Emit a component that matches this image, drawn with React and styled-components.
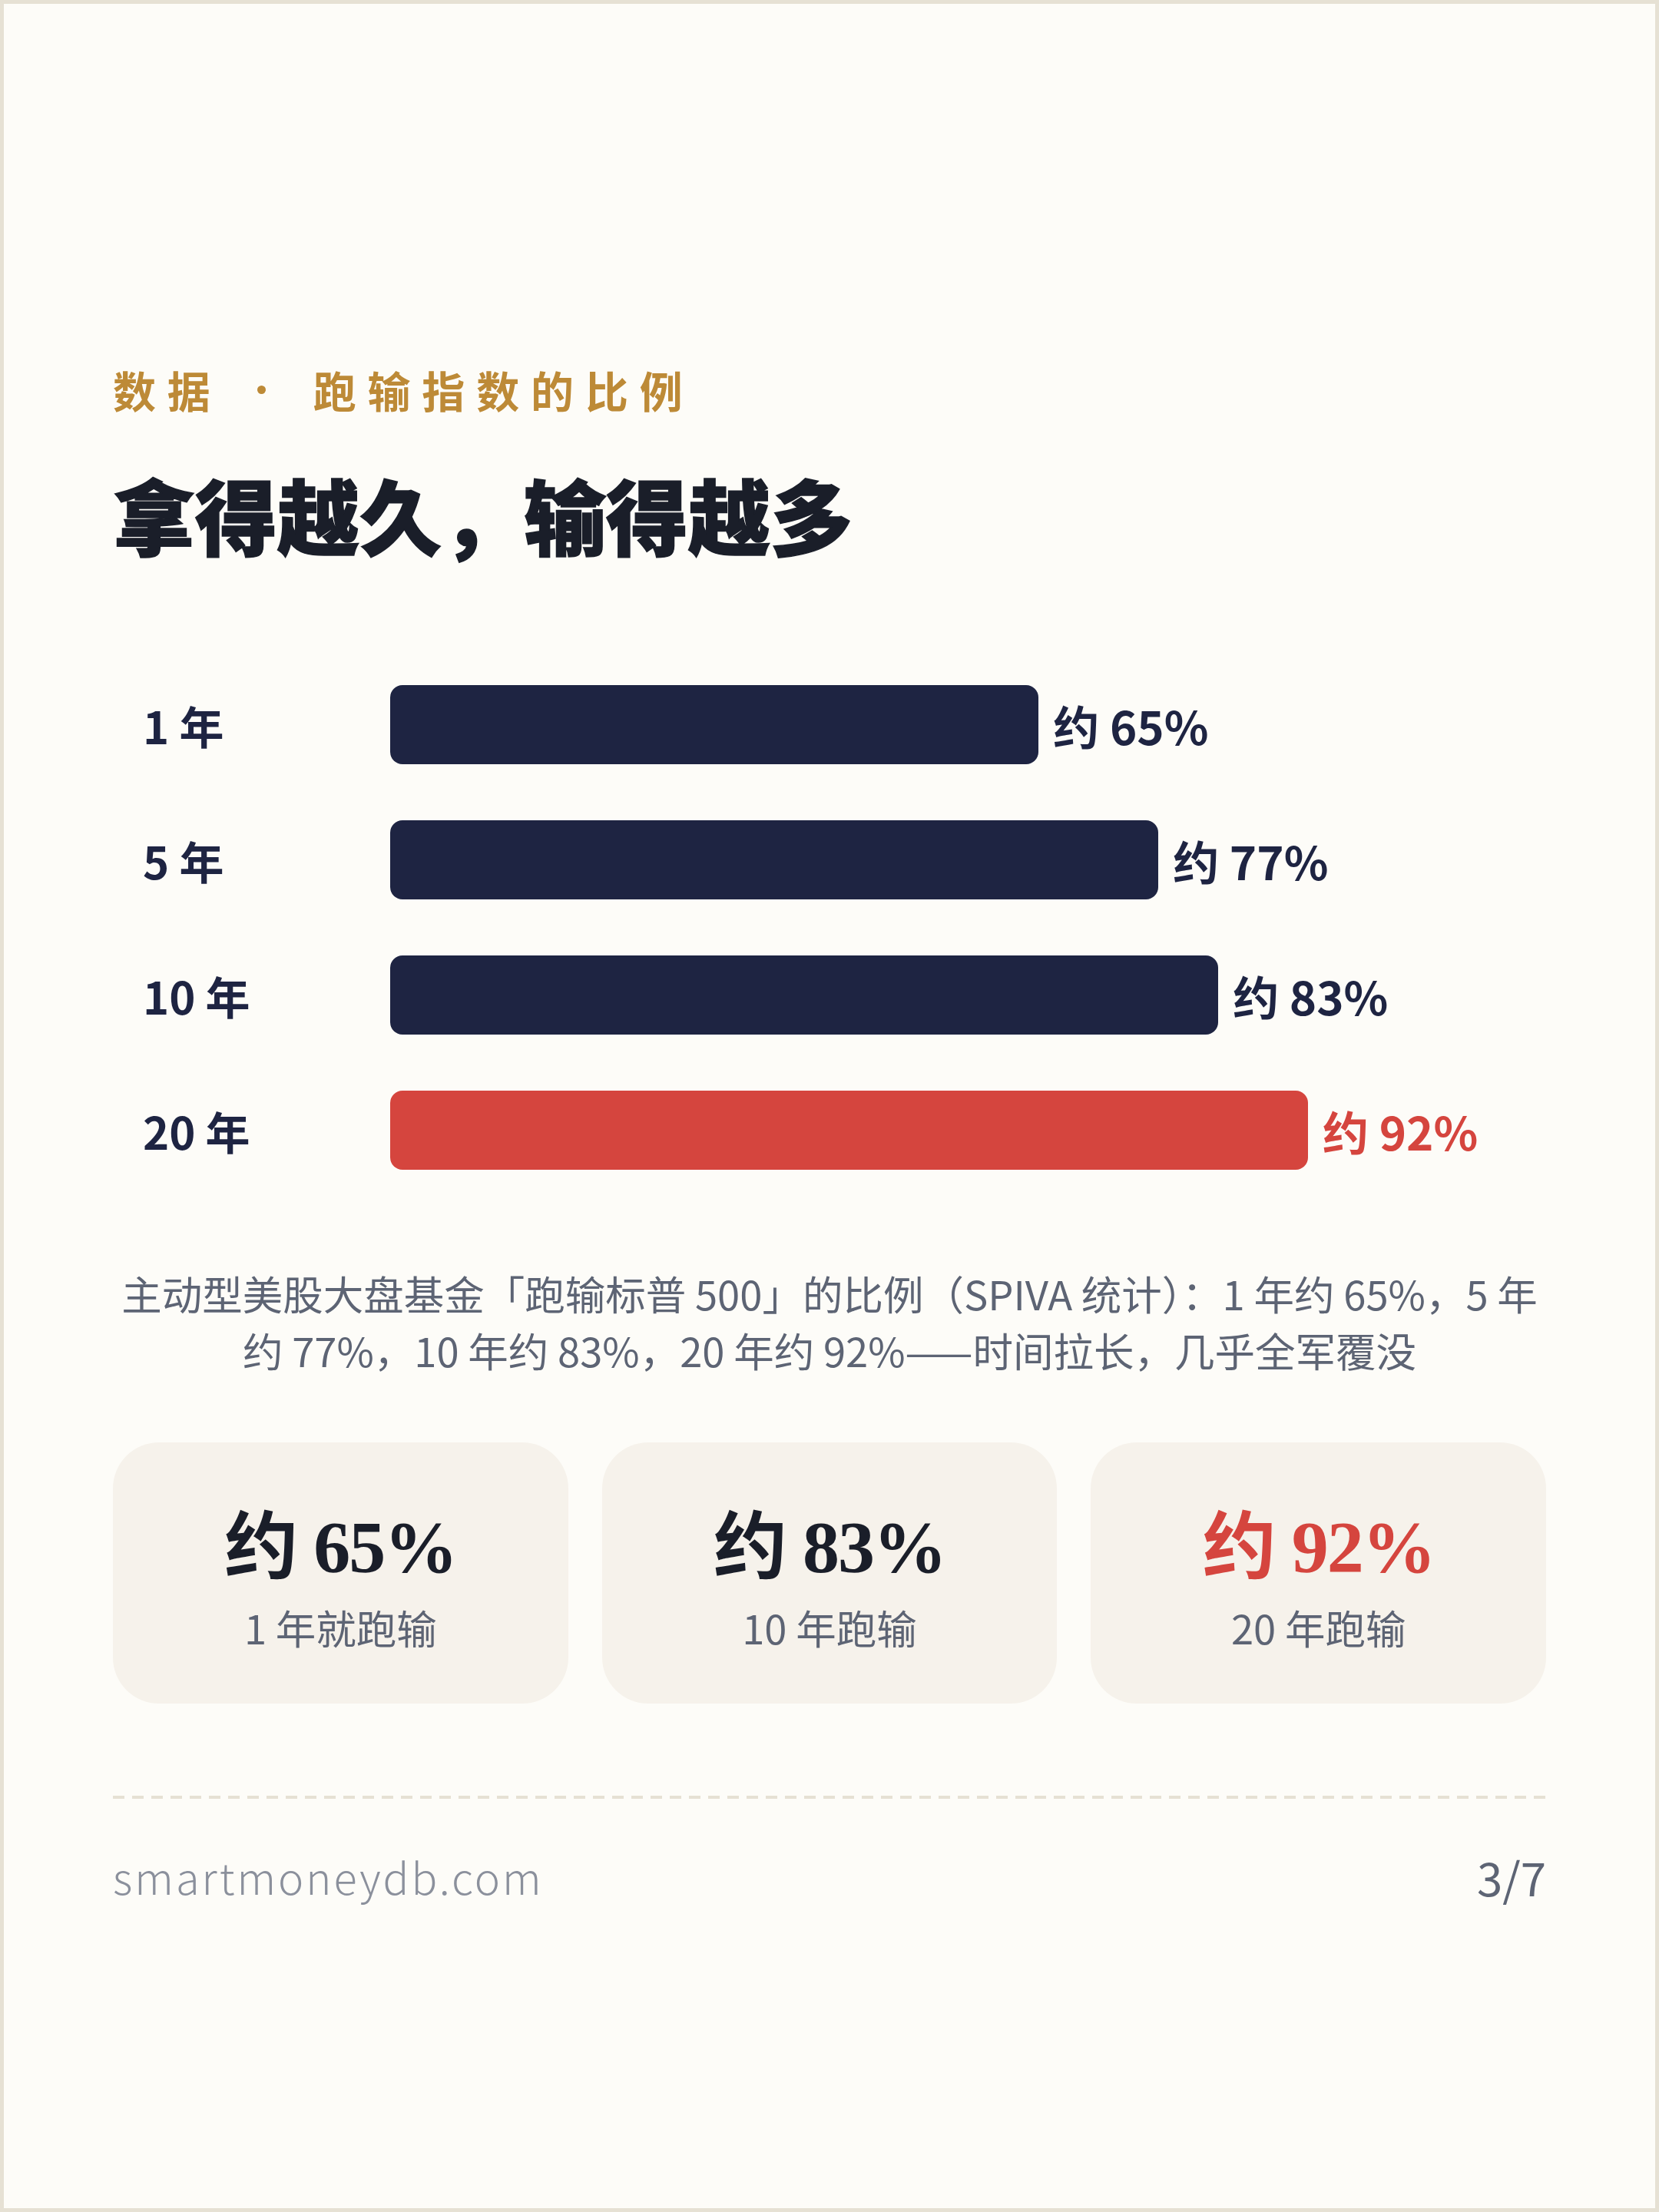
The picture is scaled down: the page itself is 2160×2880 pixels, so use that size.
import React from "react";
import styled, { createGlobalStyle } from "styled-components";

const GlobalStyle = createGlobalStyle`
  html, body { margin: 0; padding: 0; background: #fdfcf8; }
  body { font-family: "Noto Sans CJK SC", "Noto Sans", sans-serif; }
  * { box-sizing: border-box; }
`;

const NAVY = "#1e2442";
const RED = "#d5453e";
const GREY = "#5d6474";

const Page = styled.div`
  width: 2160px;
  height: 2880px;
  border: 5px solid #e6e1d4;
  background: #fdfcf8;
  padding: 463px 142px 0;
  display: flex;
  flex-direction: column;
`;

const Kicker = styled.div`
  display: flex;
  align-items: center;
  font-size: 56px;
  font-weight: 700;
  line-height: 78px;
  letter-spacing: 0.265em;
  color: #bd8a37;
`;

const Dot = styled.span`
  width: 11px;
  height: 11px;
  border-radius: 50%;
  background: currentColor;
  margin: 0 62px 0 46px;
`;

const Title = styled.h1`
  margin: 57px 0 0;
  font-size: 107px;
  font-weight: 900;
  line-height: 132px;
  letter-spacing: 0;
  color: #1a1e29;
  -webkit-text-stroke: 1.5px #1a1e29;
`;

const Chart = styled.div`
  margin-top: 157px;
  display: flex;
  flex-direction: column;
  gap: 73px;
`;

const Row = styled.div`
  display: flex;
  align-items: center;
  height: 103px;
  padding-left: 39px;
`;

const YearLabel = styled.div`
  width: 322px;
  flex-shrink: 0;
  font-size: 58px;
  font-weight: 700;
  color: ${NAVY};
`;

const Track = styled.div`
  width: 1299px;
  height: 100%;
  display: flex;
  align-items: center;
`;

const Bar = styled.div`
  height: 100%;
  flex-shrink: 0;
  border-radius: 16px;
  background: ${(p) => (p.$hot ? RED : NAVY)};
`;

const Value = styled.div`
  margin-left: 19px;
  flex-shrink: 0;
  white-space: nowrap;
  font-size: 60px;
  font-weight: 700;
  color: ${(p) => (p.$hot ? RED : NAVY)};
`;

const Caption = styled.p`
  margin: 123px 0 0;
  font-size: 52.5px;
  line-height: 74px;
  color: ${GREY};
  text-align: center;
`;

const CaptionLine = styled.span`
  display: block;
  white-space: nowrap;
`;

const Cards = styled.div`
  margin-top: 84px;
  display: grid;
  grid-template-columns: repeat(3, 1fr);
  gap: 44px;
`;

const Card = styled.div`
  height: 340px;
  border-radius: 60px;
  background: #f6f2eb;
  display: flex;
  flex-direction: column;
  align-items: center;
  padding-top: 82px;
`;

const BigNum = styled.div`
  font-family: "Liberation Serif", "Noto Sans CJK SC", serif;
  font-size: 96px;
  font-weight: 700;
  line-height: 110px;
  letter-spacing: -2px;
  color: ${(p) => (p.$hot ? RED : "#1a1e29")};
`;

const SubLabel = styled.div`
  margin-top: 16px;
  font-size: 52.5px;
  line-height: 64px;
  color: ${GREY};
`;

const Divider = styled.div`
  margin-top: 120px;
  height: 4px;
  background: repeating-linear-gradient(to right, #e6e1d4 0 15px, transparent 15px 25px);
`;

const Footer = styled.div`
  margin-top: 62px;
  display: flex;
  justify-content: space-between;
  align-items: center;
  line-height: 78px;
`;

const Domain = styled.span`
  font-size: 56px;
  font-weight: 300;
  letter-spacing: 3px;
  color: #8b909c;
`;

const PageNum = styled.span`
  font-size: 60px;
  font-weight: 400;
  color: ${GREY};
`;

const rows = [
  { year: "1 年", pct: 65 },
  { year: "5 年", pct: 77 },
  { year: "10 年", pct: 83 },
  { year: "20 年", pct: 92, hot: true },
];

const stats = [
  { num: "约 65%", label: "1 年就跑输" },
  { num: "约 83%", label: "10 年跑输" },
  { num: "约 92%", label: "20 年跑输", hot: true },
];

export default function App() {
  return (
    <>
      <GlobalStyle />
      <Page>
        <Kicker>
          <span>数据</span>
          <Dot />
          <span>跑输指数的比例</span>
        </Kicker>
        <Title>拿得越久，输得越多</Title>
        <Chart>
          {rows.map((r) => (
            <Row key={r.year}>
              <YearLabel>{r.year}</YearLabel>
              <Track>
                <Bar $hot={r.hot} style={{ width: `${r.pct}%` }} />
                <Value $hot={r.hot}>约 {r.pct}%</Value>
              </Track>
            </Row>
          ))}
        </Chart>
        <Caption>
          <CaptionLine>主动型美股大盘基金「跑输标普 500」的比例（SPIVA 统计）：1 年约 65%，5 年</CaptionLine>
          <CaptionLine>约 77%，10 年约 83%，20 年约 92%——时间拉长，几乎全军覆没</CaptionLine>
        </Caption>
        <Cards>
          {stats.map((s) => (
            <Card key={s.label}>
              <BigNum $hot={s.hot}>{s.num}</BigNum>
              <SubLabel>{s.label}</SubLabel>
            </Card>
          ))}
        </Cards>
        <Divider />
        <Footer>
          <Domain>smartmoneydb.com</Domain>
          <PageNum>3/7</PageNum>
        </Footer>
      </Page>
    </>
  );
}
